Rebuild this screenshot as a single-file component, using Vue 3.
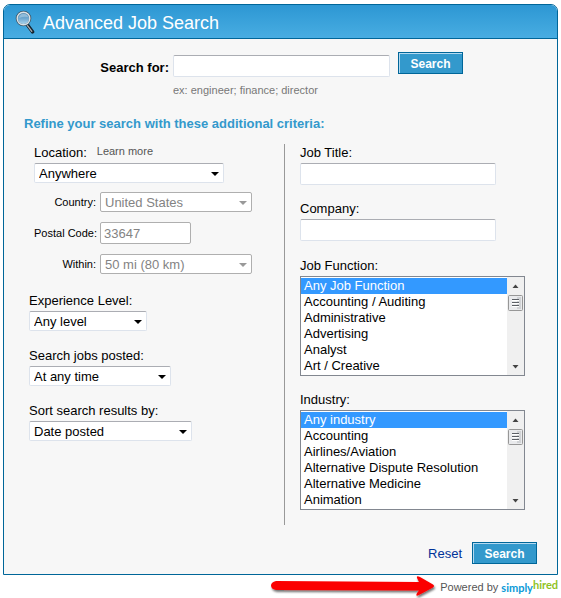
<script setup>
import { ref } from 'vue'

const keywords = ref('')
const locationMode = ref('Anywhere')
const postalCode = ref('33647')
const jobTitle = ref('')
const company = ref('')

const filters = [
  { id: 'experience', label: 'Experience Level:', options: ['Any level', 'Entry level', 'Executive'], size: 'small' },
  { id: 'posted', label: 'Search jobs posted:', options: ['At any time', 'Today', 'This week'], size: 'medium' },
  { id: 'sort', label: 'Sort search results by:', options: ['Date posted', 'Relevance'], size: 'large' }
]

const lists = ref([
  {
    id: 'function',
    label: 'Job Function:',
    selected: ['Any Job Function'],
    options: ['Any Job Function', 'Accounting / Auditing', 'Administrative', 'Advertising', 'Analyst', 'Art / Creative']
  },
  {
    id: 'industry',
    label: 'Industry:',
    selected: ['Any industry'],
    options: ['Any industry', 'Accounting', 'Airlines/Aviation', 'Alternative Dispute Resolution', 'Alternative Medicine', 'Animation']
  }
])
</script>

<template>
  <div class="page">
    <form class="panel" @submit.prevent>
      <header class="title-bar">
        <svg class="magnifier" viewBox="0 0 20 24" aria-hidden="true">
          <defs>
            <linearGradient id="lens" x1="0" y1="0" x2="0" y2="1">
              <stop offset="0" stop-color="#4f8fbd" />
              <stop offset="0.5" stop-color="#6fa9d0" />
              <stop offset="1" stop-color="#b5daf0" />
            </linearGradient>
          </defs>
          <path d="M12.500 15 L17.500 21.800" stroke="#15242f" stroke-width="3.6" stroke-linecap="round" />
          <path d="M12.300 15.400 L16.800 21.300" stroke="#a8adb0" stroke-width="1.3" stroke-linecap="round" />
          <circle cx="8.500" cy="8.500" r="6.700" fill="url(#lens)" stroke="#3c5566" stroke-width="2.200" />
          <circle cx="8.500" cy="8.500" r="6.300" fill="none" stroke="#d9e2e7" stroke-width="1.400" />
          <path d="M4 8 Q4.500 4 8.500 3.800 Q12.500 4 13 7 Q8.500 6 4 8Z" fill="#a9cce3" opacity="0.65" />
        </svg>
        <h1>Advanced Job Search</h1>
      </header>

      <div class="body">
        <div class="search-row">
          <label class="search-label" for="keywords">Search for:</label>
          <input id="keywords" v-model="keywords" class="field keywords" type="text" />
          <button class="primary" type="submit">Search</button>
          <p class="hint">ex: engineer; finance; director</p>
        </div>

        <h2>Refine your search with these additional criteria:</h2>

        <div class="columns">
          <div class="left">
            <div class="location">
              <div class="location-head">
                <label for="location">Location:</label>
                <a class="learn" href="#">Learn more</a>
              </div>
              <span class="picker wide">
                <select id="location" v-model="locationMode" class="field">
                  <option>Anywhere</option>
                  <option>Located in or near</option>
                </select>
              </span>
              <div class="details">
                <label for="country">Country:</label>
                <span class="picker off">
                  <select id="country" class="field" disabled><option>United States</option></select>
                </span>
                <label for="postal">Postal Code:</label>
                <input id="postal" v-model="postalCode" class="field postal" type="text" disabled />
                <label for="within">Within:</label>
                <span class="picker off">
                  <select id="within" class="field" disabled><option>50 mi (80 km)</option></select>
                </span>
              </div>
            </div>

            <div v-for="f in filters" :key="f.id" class="group">
              <label :for="f.id">{{ f.label }}</label>
              <span class="picker" :class="f.size">
                <select :id="f.id" class="field">
                  <option v-for="o in f.options" :key="o">{{ o }}</option>
                </select>
              </span>
            </div>
          </div>

          <div class="right">
            <div class="stack">
              <div class="group">
                <label for="job-title">Job Title:</label>
                <input id="job-title" v-model="jobTitle" class="field entry" type="text" />
              </div>
              <div class="group">
                <label for="company">Company:</label>
                <input id="company" v-model="company" class="field entry" type="text" />
              </div>
            </div>
            <div class="stack">
              <div v-for="l in lists" :key="l.id" class="group">
                <label :for="l.id">{{ l.label }}</label>
                <div class="listbox">
                  <select :id="l.id" v-model="l.selected" multiple size="6">
                    <option v-for="o in l.options" :key="o" :class="{ chosen: l.selected.includes(o) }">{{ o }}</option>
                  </select>
                  <svg class="scrollbar" viewBox="0 0 17 98" aria-hidden="true">
                    <rect width="17" height="98" fill="#f0f0f0" />
                    <path d="M5.500 11 L8.500 7.500 L11.500 11Z" fill="#444" />
                    <rect x="1.5" y="18.5" width="14" height="15" rx="1" fill="#e9eaec" stroke="#979797" />
                    <rect x="10" y="20" width="4" height="12" fill="#d0d2d5" />
                    <path d="M5 22.5h7M5 25.5h7M5 28.5h7" stroke="#5c6066" />
                    <path d="M5 23.5h7M5 26.5h7M5 29.5h7" stroke="#fff" />
                    <path d="M5.500 88 L11.500 88 L8.500 91.500Z" fill="#444" />
                  </svg>
                </div>
              </div>
            </div>
          </div>
        </div>

        <div class="actions">
          <a class="reset" href="#">Reset</a>
          <button class="primary" type="submit">Search</button>
        </div>
      </div>
    </form>

    <footer class="credit">
      <svg class="pointer" viewBox="0 0 168 23" aria-hidden="true">
        <defs>
          <filter id="shade" x="-5%" y="-20%" width="110%" height="150%">
            <feDropShadow dx="1" dy="2" stdDeviation="1.2" flood-color="#000" flood-opacity="0.55" />
          </filter>
        </defs>
        <path d="M6 6 L149 7 L147 3 Q146 0 150 2 L163 9.500 Q165 11 163 12.500 L149 20 Q145 22 147 18 L149 15.500 L6 15 Q1 14 1 10.500 Q1 7 6 6Z" fill="#fb0200" filter="url(#shade)" />
      </svg>
      <span class="powered">Powered by</span>
      <a class="brand" href="#"><span class="simply">simply</span><span class="hired">hired</span></a>
    </footer>
  </div>
</template>

<style>
body {
  background: #fff;
}
</style>

<style scoped>
.page {
  padding: 4px 3px 0;
  font-family: 'Liberation Sans', Arial, sans-serif;
  font-size: 13px;
  line-height: 16px;
  color: #000;
}
.panel {
  background: #f7f7f7;
  border: 1px solid #069;
  border-radius: 7px 7px 0 0;
  overflow: hidden;
}
.title-bar {
  display: flex;
  align-items: center;
  gap: 8px;
  height: 33px;
  padding-left: 11px;
  background: linear-gradient(#2d97d3, #48ade2);
  border-bottom: 1px solid #069;
}
.magnifier {
  width: 20px;
  height: 24px;
}
h1,
h2,
p {
  margin: 0;
}
h1 {
  padding-top: 2px;
  font-size: 18px;
  line-height: 24px;
  font-weight: 400;
  color: #fff;
}
.body {
  padding: 13px 20px 10px;
}
.search-row {
  display: grid;
  grid-template-columns: 145px minmax(0, 217px) 65px;
  column-gap: 4px;
}
.search-label {
  padding-top: 8px;
  text-align: right;
  font-weight: 700;
}
.field {
  box-sizing: border-box;
  width: 100%;
  height: 20px;
  margin: 0;
  padding: 2px 4px 0;
  border: 1px solid #dde3ec;
  border-top-color: #abadb3;
  border-radius: 2px;
  background: #fff;
  font: inherit;
  color: #000;
  appearance: none;
}
input.field {
  height: 22px;
  padding: 0 3px;
}
.field:disabled {
  border-color: #afafaf;
  color: #838383;
  opacity: 1;
}
.keywords {
  margin-top: 3px;
}
.primary {
  width: 65px;
  height: 22px;
  padding: 1px 0 0;
  border: 1px solid #069;
  background: #39c;
  box-shadow: inset 1px 1px 0 #b5daf0;
  font: inherit;
  font-size: 12px;
  font-weight: 700;
  color: #fff;
}
.search-row .primary {
  margin-left: 4px;
}
.hint {
  grid-column: 2 / 4;
  padding-top: 5px;
  font-size: 11px;
  color: #777;
}
h2 {
  margin-top: 18px;
  font-size: 13px;
  line-height: 16px;
  color: #39c;
}
.columns {
  display: grid;
  grid-template-columns: 260px 1fr;
  margin-top: 12px;
}
.left {
  padding-left: 5px;
}
.right {
  display: flex;
  flex-direction: column;
  gap: 16px;
  min-height: 381px;
  box-sizing: border-box;
  padding-left: 15px;
  border-left: 1px solid #999;
}
.stack {
  display: flex;
  flex-direction: column;
  gap: 15px;
}
.location {
  padding-left: 5px;
}
.location-head {
  display: flex;
  gap: 10px;
  height: 19px;
}
.location-head label {
  padding-top: 1px;
}
.learn {
  font-size: 11px;
  line-height: 14px;
  color: #555;
  text-decoration: none;
}
.picker {
  position: relative;
  display: block;
}
.picker::after {
  content: '';
  position: absolute;
  top: 9px;
  right: 5px;
  border: 4px solid transparent;
  border-top-color: #000;
  border-bottom: 0;
  pointer-events: none;
}
.picker.off::after {
  border-top-color: #999;
}
.wide {
  width: 190px;
}
.small {
  width: 118px;
}
.medium {
  width: 142px;
}
.large {
  width: 163px;
}
.details {
  display: grid;
  grid-template-columns: 62px 152px;
  column-gap: 4px;
  row-gap: 10px;
  align-items: center;
  margin-top: 9px;
}
.details label {
  text-align: right;
  font-size: 11px;
  white-space: nowrap;
}
.postal {
  width: 91px;
}
.group label {
  display: block;
  padding: 1px 0 2px;
}
.left .group {
  margin-top: 16px;
}
.left .location + .group {
  margin-top: 18px;
}
.entry {
  display: block;
  width: 196px;
}
.listbox {
  position: relative;
  width: 225px;
}
.listbox select {
  display: block;
  box-sizing: border-box;
  width: 100%;
  height: 100px;
  margin: 0;
  padding: 1px 17px 1px 0;
  border: 1px solid #828790;
  border-radius: 0;
  background: #fff;
  font: inherit;
  color: #000;
  scrollbar-width: none;
  outline: 0;
}
.listbox option {
  height: 16px;
  min-height: 16px;
  padding: 0 3px;
  line-height: 16px;
}
.listbox option.chosen {
  background: #39f linear-gradient(#39f, #39f);
  color: #fff;
}
.scrollbar {
  position: absolute;
  top: 1px;
  right: 1px;
  width: 17px;
  height: 98px;
}
.actions {
  display: flex;
  justify-content: flex-end;
  align-items: center;
  gap: 10px;
  margin-top: 17px;
}
.reset {
  padding-top: 2px;
  color: #039;
  text-decoration: none;
}
.credit {
  display: flex;
  justify-content: flex-end;
  align-items: flex-start;
  height: 23px;
}
.pointer {
  width: 168px;
  height: 23px;
}
.powered {
  margin: 4px 3px 0 2px;
  font-size: 11px;
  color: #555;
}
.brand {
  display: flex;
  font-family: Lato, sans-serif;
  font-size: 11px;
  line-height: 14px;
  font-weight: 700;
  text-decoration: none;
}
.simply {
  padding-top: 6px;
  color: #0a9ad7;
}
.hired {
  padding-top: 3px;
  color: #8fc31f;
}
</style>
